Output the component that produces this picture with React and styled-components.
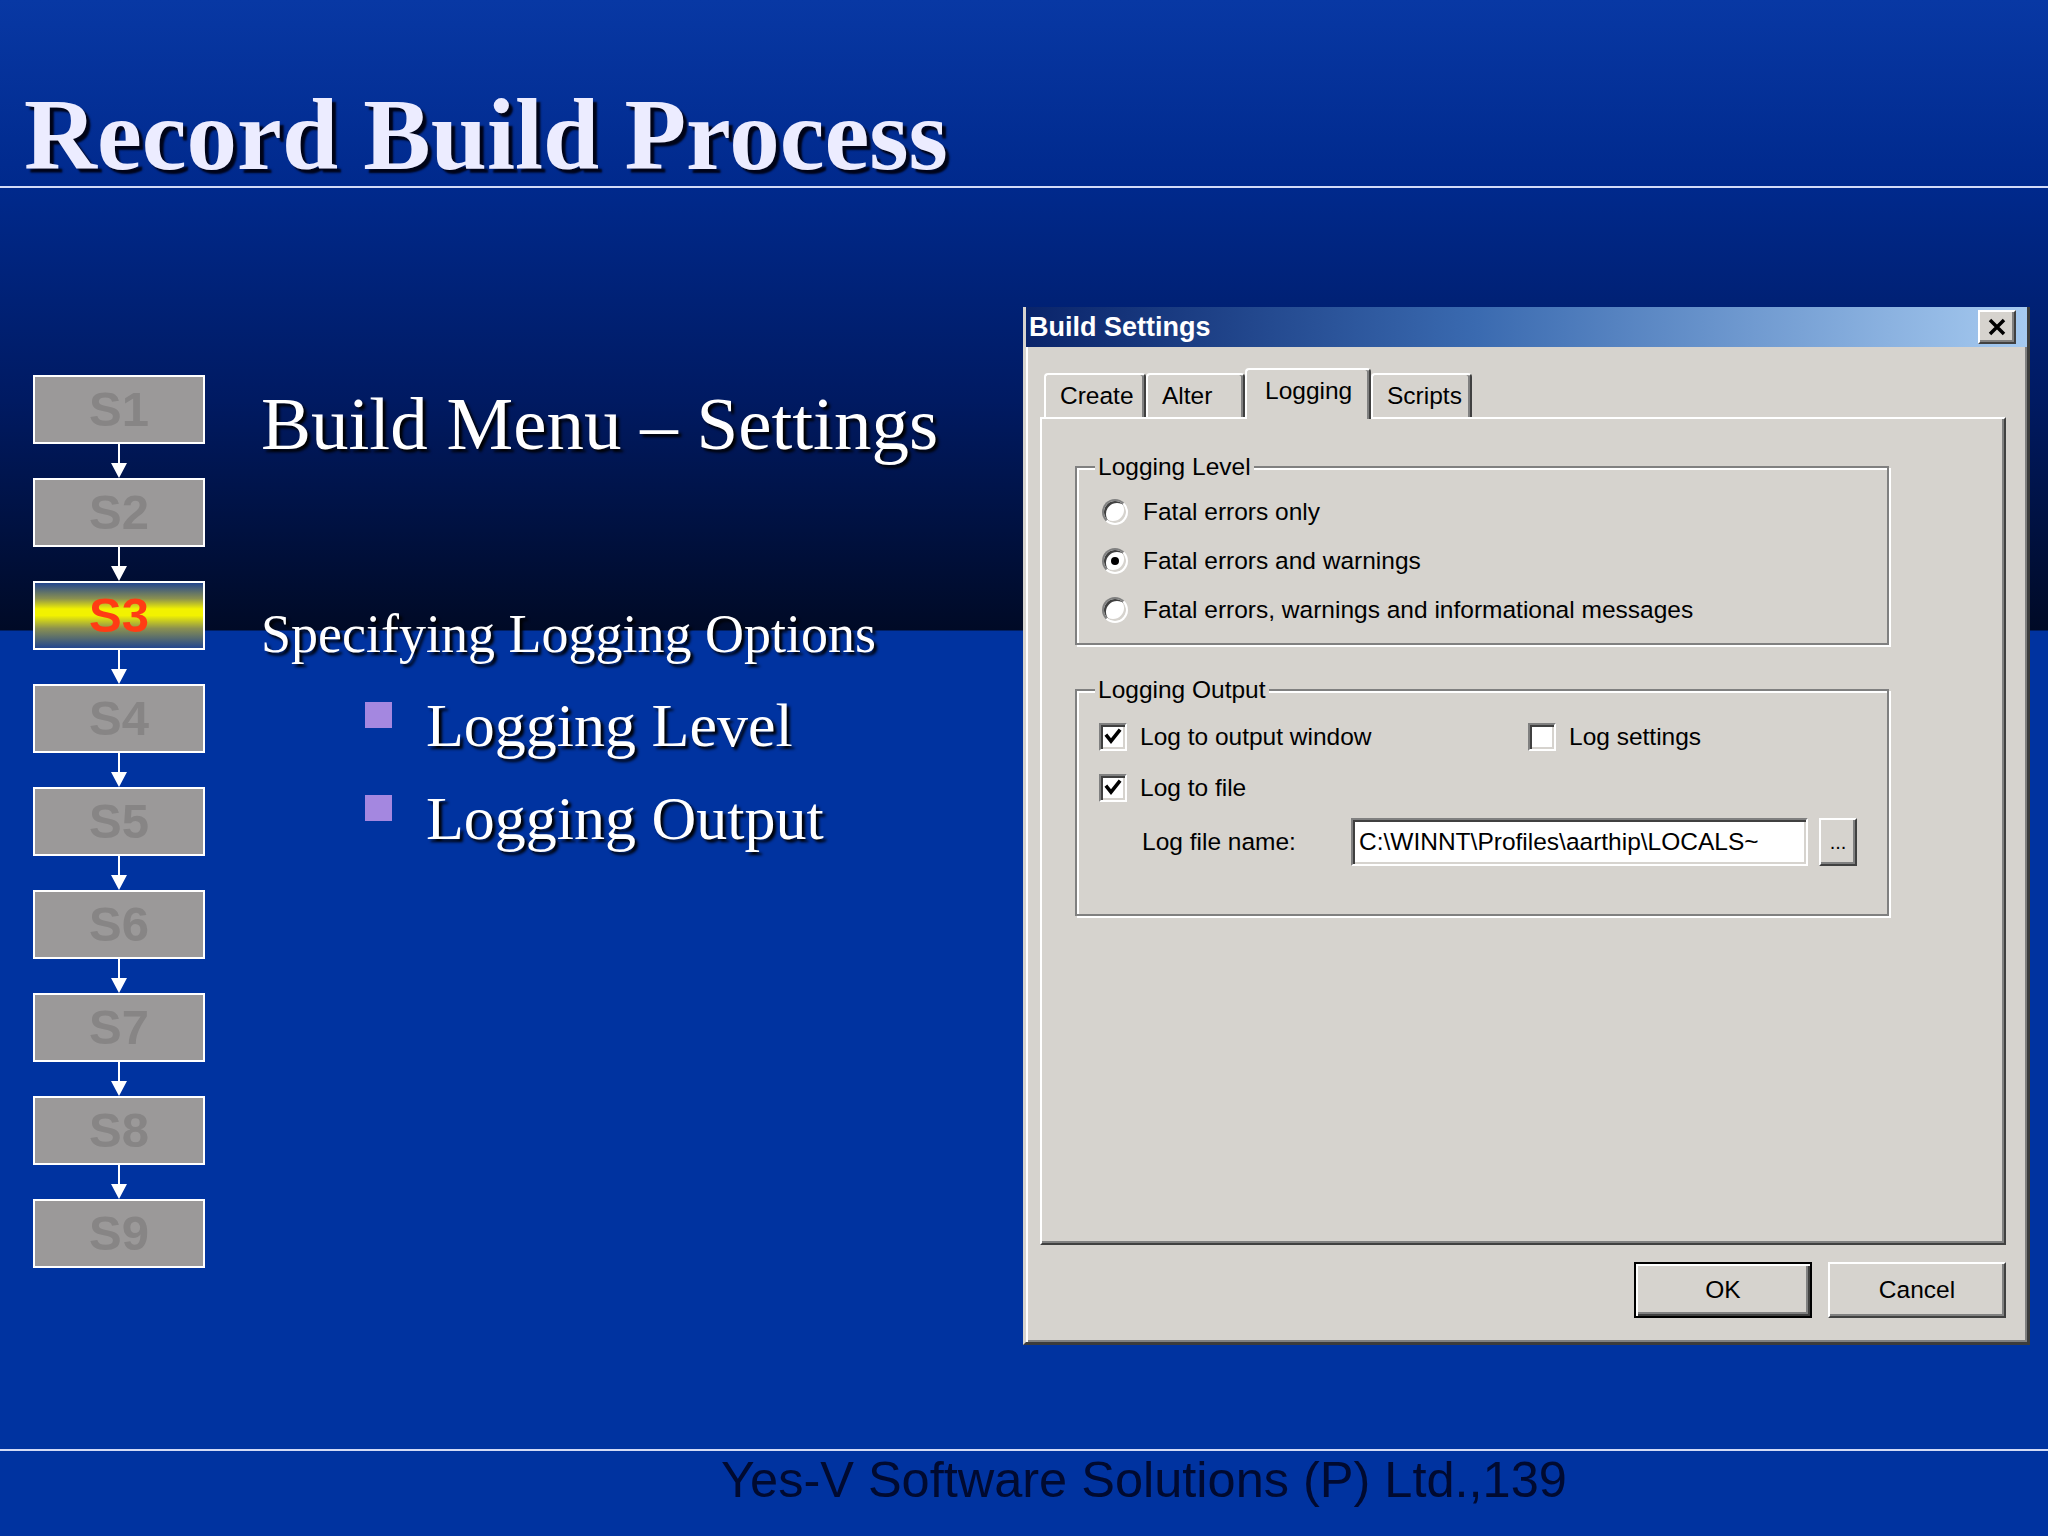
import React from 'react'
import styled, { createGlobalStyle } from 'styled-components'

const GlobalStyle = createGlobalStyle`
  *, *::before, *::after { box-sizing: border-box; }
  html, body { margin: 0; padding: 0; }
  body { width: 2048px; height: 1536px; overflow: hidden; background: #0033a0; }
`

const winFont = `"Liberation Sans", Arial, sans-serif`
const winSize = 24.5
const face = '#d6d3ce'

const Slide = styled.div`
  width: 2048px;
  height: 1536px;
  display: flex;
  flex-direction: column;
  overflow: hidden;
  background: linear-gradient(180deg, #0838a4 0px, #00298c 188px, #001a62 400px, #000a26 630px, #0033a0 631px, #0033a0 100%);
`

const Header = styled.header`
  height: 188px;
  padding: 85px 0 0 24px;
  border-bottom: 2px solid #d2daf6;
`

const Title = styled.h1`
  margin: 0;
  font: 700 101px/1 "Liberation Serif", "Times New Roman", serif;
  color: #ececff;
  white-space: nowrap;
  text-shadow: 4px 4px 2px #000418;
`

const Main = styled.main`
  height: 1261px;
  display: flex;
  align-items: flex-start;
`

const Steps = styled.div`
  width: 172px;
  margin-left: 33px;
  padding-top: 187px;
  display: flex;
  flex-direction: column;
`

const StepBox = styled.div`
  height: 69px;
  border: 2px solid #fff;
  background: ${p => p.$active
    ? 'linear-gradient(180deg, #23468e 0%, #8a9050 24%, #f2f200 40%, #f2f200 50%, #8a9050 70%, #23468e 100%)'
    : '#9b9999'};
  color: ${p => p.$active ? '#ff3c14' : '#878585'};
  font: 700 49px/65px "Liberation Sans", Arial, sans-serif;
  text-align: center;
`

const Connector = styled.div`
  height: 34px;
  display: flex;
  flex-direction: column;
  align-items: center;
`

const Stem = styled.div`
  width: 2px;
  flex: 1;
  background: #fff;
`

const Head = styled.div`
  width: 0;
  height: 0;
  border-left: 8px solid transparent;
  border-right: 8px solid transparent;
  border-top: 15px solid #fff;
`

const Content = styled.section`
  width: 818px;
  padding: 198px 0 0 56px;
  color: #fff;
  font-family: "Liberation Serif", "Times New Roman", serif;
  text-shadow: 3px 3px 3px #000;
  white-space: nowrap;
`

const Heading = styled.h2`
  margin: 0;
  font-weight: 400;
  font-size: 75px;
  line-height: 1;
`

const Sub = styled.p`
  margin: 146px 0 0;
  font-size: 54px;
  line-height: 1;
`

const List = styled.ul`
  margin: 33px 0 0 104px;
  padding: 0;
  list-style: none;
`

const Item = styled.li`
  display: flex;
  align-items: flex-start;
  gap: 34px;
  font-size: 62px;
  line-height: 1;
  & + & { margin-top: 31px; }
`

const Bullet = styled.span`
  flex: none;
  width: 27px;
  height: 26px;
  margin-top: 8px;
  background: #a487e0;
`

const Window = styled.div`
  width: 1007px;
  height: 1038px;
  margin-top: 119px;
  display: flex;
  flex-direction: column;
  background: ${face};
  border: 3px solid;
  border-top-width: 0;
  border-color: ${face} #3c3c3c #3c3c3c ${face};
  box-shadow: inset 2px 0 0 #fff, inset -2px -2px 0 #808080;
  font-family: ${winFont};
  font-size: ${winSize}px;
  color: #000;
`

const TitleBar = styled.div`
  height: 40px;
  flex: none;
  display: flex;
  align-items: center;
  justify-content: space-between;
  padding: 0 11px 0 3px;
  background: linear-gradient(90deg, #0a246a 0%, #3a6ab0 45%, #a6caf0 100%);
`

const TitleText = styled.span`
  font: 700 27px/1 "Liberation Sans", Arial, sans-serif;
  color: #fff;
`

const CloseBtn = styled.div`
  width: 38px;
  height: 34px;
  display: flex;
  align-items: center;
  justify-content: center;
  background: ${face};
  border: 2px solid;
  border-color: #fff #404040 #404040 #fff;
  box-shadow: inset -2px -2px 0 #808080;
`

const DialogBody = styled.div`
  flex: 1;
  display: flex;
  flex-direction: column;
  padding: 21px 21px 24px 14px;
`

const TabStrip = styled.div`
  height: 49px;
  flex: none;
  display: flex;
  align-items: flex-end;
  padding-left: 4px;
`

const Tab = styled.div`
  position: relative;
  z-index: ${p => p.$active ? 2 : 1};
  width: ${p => p.$w}px;
  height: ${p => p.$active ? 51 : 44}px;
  margin-bottom: ${p => p.$active ? -2 : 0}px;
  display: flex;
  align-items: center;
  padding: ${p => p.$active ? '0 0 6px 18px' : '0 0 0 14px'};
  background: ${face};
  border: 2px solid;
  border-bottom: 0;
  border-color: #fff #404040 transparent #fff;
  border-radius: 4px 4px 0 0;
  box-shadow: inset -2px 0 0 #808080;
  line-height: 1;
`

const Panel = styled.div`
  flex: 1;
  padding: 31px 0 0 33px;
  border: 2px solid;
  border-color: #fff #404040 #404040 #fff;
  box-shadow: inset -2px -2px 0 #808080;
`

const Group = styled.fieldset`
  width: 814px;
  min-width: 0;
  margin: ${p => p.$first ? 0 : '28px 0 0'};
  padding: ${p => p.$first ? '4px 0 9px 22px' : '5px 0 48px 22px'};
  border: 2px solid #808080;
  box-shadow: inset 2px 2px 0 #fff, 2px 2px 0 #fff;
`

const Legend = styled.legend`
  margin-left: -4px;
  padding: 0 3px;
  background: ${face};
  line-height: 33px;
`

const Row = styled.div`
  height: ${p => p.$h || 49}px;
  display: flex;
  align-items: center;
  gap: ${p => p.$gap || 15}px;
  white-space: nowrap;
`

const CheckGrid = styled.div`
  display: grid;
  grid-template-columns: 429px auto;
`

const Radio = styled.span`
  flex: none;
  position: relative;
  width: 26px;
  height: 26px;
  margin-left: 3px;
  border-radius: 50%;
  background: #fff;
  border: 2px solid;
  border-color: #808080 #fff #fff #808080;
  box-shadow: inset 2px 2px 0 #404040, inset -2px -2px 0 ${face};
  &::after {
    content: '';
    display: ${p => p.$checked ? 'block' : 'none'};
    position: absolute;
    left: 7px;
    top: 7px;
    width: 8px;
    height: 8px;
    border-radius: 50%;
    background: #000;
  }
`

const Box = styled.span`
  flex: none;
  width: 28px;
  height: 28px;
  display: flex;
  align-items: center;
  justify-content: center;
  background: #fff;
  border: 2px solid;
  border-color: #808080 #fff #fff #808080;
  box-shadow: inset 2px 2px 0 #404040, inset -2px -2px 0 ${face};
`

const FileRow = styled.div`
  height: 48px;
  margin-top: 5px;
  display: flex;
  align-items: center;
  white-space: nowrap;
`

const FileLabel = styled.span`
  width: 252px;
  padding-left: 43px;
`

const TextField = styled.div`
  width: 457px;
  height: 48px;
  display: flex;
  align-items: center;
  padding-left: 6px;
  overflow: hidden;
  background: #fff;
  border: 2px solid;
  border-color: #808080 #fff #fff #808080;
  box-shadow: inset 2px 2px 0 #404040, inset -2px -2px 0 ${face};
  white-space: nowrap;
`

const Button = styled.div`
  width: ${p => p.$w}px;
  height: ${p => p.$h}px;
  margin-left: ${p => p.$ml || 0}px;
  display: flex;
  align-items: center;
  justify-content: center;
  background: ${face};
  border: 2px solid;
  border-color: ${p => p.$default ? '#000' : '#fff #404040 #404040 #fff'};
  box-shadow: ${p => p.$default
    ? 'inset 2px 2px 0 #fff, inset -2px -2px 0 #404040, inset -4px -4px 0 #808080'
    : 'inset -2px -2px 0 #808080'};
  font-size: ${p => p.$fs || winSize}px;
  line-height: 1;
`

const ButtonRow = styled.div`
  display: flex;
  justify-content: flex-end;
  gap: 16px;
  margin-top: 17px;
`

const Footer = styled.footer`
  height: 87px;
  border-top: 2px solid #d2daf6;
  padding: 4px 0 0 721px;
  font: 400 50.5px/1 "Liberation Sans", Arial, sans-serif;
  color: #000a30;
  white-space: nowrap;
`

const CheckMark = () => (
  <svg width="18" height="18" viewBox="0 0 18 18">
    <path d="M3 8 L7 13 L15 3" fill="none" stroke="#000" strokeWidth="3.6" strokeLinecap="square" />
  </svg>
)

const CloseGlyph = () => (
  <svg width="20" height="18" viewBox="0 0 20 18">
    <path d="M3 2 L17 16 M17 2 L3 16" stroke="#000" strokeWidth="3.5" />
  </svg>
)

const steps = ['S1', 'S2', 'S3', 'S4', 'S5', 'S6', 'S7', 'S8', 'S9']

const tabs = [
  { label: 'Create', w: 102 },
  { label: 'Alter', w: 99 },
  { label: 'Logging', w: 126, active: true },
  { label: 'Scripts', w: 101 },
]

const levels = [
  { label: 'Fatal errors only' },
  { label: 'Fatal errors and warnings', checked: true },
  { label: 'Fatal errors, warnings and informational messages' },
]

const Check = ({ checked, children }) => (
  <Row $gap={13} $h={51}>
    <Box>{checked && <CheckMark />}</Box>
    <span>{children}</span>
  </Row>
)

const App = () => {
  return (
    <Slide>
      <GlobalStyle />
      <Header>
        <Title>Record Build Process</Title>
      </Header>
      <Main>
        <Steps>
          {steps.map((s, i) => (
            <React.Fragment key={s}>
              {i > 0 && (
                <Connector>
                  <Stem />
                  <Head />
                </Connector>
              )}
              <StepBox $active={s === 'S3'}>{s}</StepBox>
            </React.Fragment>
          ))}
        </Steps>

        <Content>
          <Heading>Build Menu – Settings</Heading>
          <Sub>Specifying Logging Options</Sub>
          <List>
            <Item><Bullet />Logging Level</Item>
            <Item><Bullet />Logging Output</Item>
          </List>
        </Content>

        <Window>
          <TitleBar>
            <TitleText>Build Settings</TitleText>
            <CloseBtn><CloseGlyph /></CloseBtn>
          </TitleBar>
          <DialogBody>
            <TabStrip>
              {tabs.map(t => (
                <Tab key={t.label} $w={t.w} $active={t.active}>{t.label}</Tab>
              ))}
            </TabStrip>
            <Panel>
              <Group $first>
                <Legend>Logging Level</Legend>
                {levels.map(l => (
                  <Row key={l.label}>
                    <Radio $checked={l.checked} />
                    <span>{l.label}</span>
                  </Row>
                ))}
              </Group>
              <Group>
                <Legend>Logging Output</Legend>
                <CheckGrid>
                  <Check checked>Log to output window</Check>
                  <Check>Log settings</Check>
                </CheckGrid>
                <Check checked>Log to file</Check>
                <FileRow>
                  <FileLabel>Log file name:</FileLabel>
                  <TextField>C:\WINNT\Profiles\aarthip\LOCALS~</TextField>
                  <Button $w={38} $h={48} $ml={11} $fs={20}>...</Button>
                </FileRow>
              </Group>
            </Panel>
            <ButtonRow>
              <Button $w={178} $h={56} $default>OK</Button>
              <Button $w={178} $h={56}>Cancel</Button>
            </ButtonRow>
          </DialogBody>
        </Window>
      </Main>
      <Footer>Yes-V Software Solutions (P) Ltd.,139</Footer>
    </Slide>
  )
}

export default App
